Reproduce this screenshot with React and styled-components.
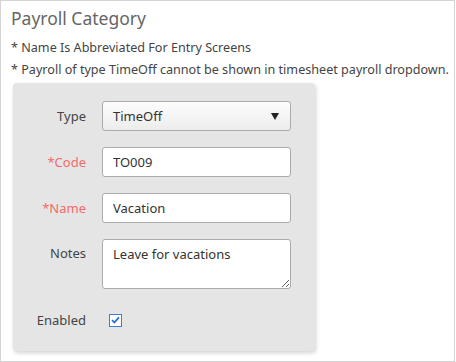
import styled, { createGlobalStyle } from "styled-components";

const GlobalStyle = createGlobalStyle`
  html, body {
    margin: 0;
    padding: 0;
    background: #fff;
  }
  body {
    font-family: "Noto Sans", "Open Sans", Arial, sans-serif;
  }
`;

const Page = styled.div`
  box-sizing: border-box;
  width: 455px;
  height: 362px;
  border: 1px solid #d4d4d4;
  padding: 5px 10px 0 10px;
`;

const Title = styled.h1`
  margin: 0;
  font-size: 17.5px;
  font-weight: 400;
  line-height: 24px;
  color: #666;
`;

const Notes = styled.div`
  margin-top: 7px;
  font-size: 12.6px;
  line-height: 22px;
  color: #444;
  white-space: nowrap;
`;

const Panel = styled.div`
  box-sizing: border-box;
  width: 302px;
  margin: 2px 0 0 2px;
  padding: 18px 24px 16px 0;
  background: #e5e5e5;
  border-radius: 4px;
  box-shadow: 1px 2px 4px rgba(0, 0, 0, 0.18);
  display: grid;
  grid-template-columns: 73px 189px;
  column-gap: 16px;
  row-gap: 16px;
`;

const Label = styled.label`
  font-size: 13px;
  color: ${(p) => (p.$required ? "#f26b6b" : "#444")};
  text-align: right;
  align-self: ${(p) => (p.$top ? "start" : "center")};
  padding-top: ${(p) => (p.$top ? "5px" : "0")};
  line-height: 18px;
`;

const fieldBase = `
  box-sizing: border-box;
  width: 189px;
  border: 1px solid #ababab;
  border-radius: 3px;
  font-family: "Noto Sans", "Open Sans", Arial, sans-serif;
  font-size: 13px;
  color: #333;
  padding: 0 10px;
  outline: none;
`;

const Select = styled.div`
  ${fieldBase}
  height: 30px;
  display: flex;
  align-items: center;
  justify-content: space-between;
  background: linear-gradient(#fdfdfd, #ececec);
`;

const Arrow = styled.span`
  width: 0;
  height: 0;
  margin-right: 1px;
  border-left: 4.5px solid transparent;
  border-right: 4.5px solid transparent;
  border-top: 7px solid #222;
`;

const Input = styled.input`
  ${fieldBase}
  height: 30px;
  background: #fff;
`;

const TextArea = styled.textarea`
  ${fieldBase}
  height: 50px;
  padding: 5px 10px;
  line-height: 18px;
  background: #fff;
  resize: vertical;
`;

const CheckCell = styled.div`
  height: 30px;
  display: flex;
  align-items: center;
  padding-left: 7px;
`;

const Check = styled.span`
  box-sizing: border-box;
  width: 13px;
  height: 13px;
  border: 1px solid #3d7be0;
  background: #fff;
  display: flex;
  align-items: center;
  justify-content: center;
`;

export default function App() {
  return (
    <>
      <GlobalStyle />
      <Page>
        <Title>Payroll Category</Title>
        <Notes>
          <div>* Name Is Abbreviated For Entry Screens</div>
          <div>* Payroll of type TimeOff cannot be shown in timesheet payroll dropdown.</div>
        </Notes>
        <Panel>
          <Label>Type</Label>
          <Select>
            <span>TimeOff</span>
            <Arrow />
          </Select>

          <Label $required>*Code</Label>
          <Input defaultValue="TO009" />

          <Label $required>*Name</Label>
          <Input defaultValue="Vacation" />

          <Label $top>Notes</Label>
          <TextArea defaultValue="Leave for vacations" />

          <Label>Enabled</Label>
          <CheckCell>
            <Check>
              <svg width="9" height="8" viewBox="0 0 9 8">
                <path d="M1 4.2 L3.4 6.4 L8 1.4" fill="none" stroke="#2f6fd6" strokeWidth="1.8" />
              </svg>
            </Check>
          </CheckCell>
        </Panel>
      </Page>
    </>
  );
}
